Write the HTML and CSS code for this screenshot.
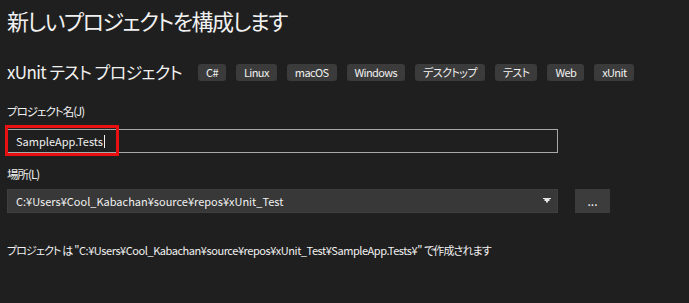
FILE: index.html
```html
<!DOCTYPE html>
<html lang="ja">
<head>
<meta charset="utf-8">
<link rel="stylesheet" href="styles.css">
</head>
<body>
<main class="page">
  <h1 class="title">新しいプロジェクトを構成します</h1>
  <div class="header-row">
    <h2 class="subtitle">xUnit テスト プロジェクト</h2>
    <ul class="tags">
      <li class="tag">C#</li>
      <li class="tag">Linux</li>
      <li class="tag">macOS</li>
      <li class="tag">Windows</li>
      <li class="tag">デスクトップ</li>
      <li class="tag">テスト</li>
      <li class="tag">Web</li>
      <li class="tag">xUnit</li>
    </ul>
  </div>

  <label class="label label-name">プロジェクト名(J)</label>
  <div class="field">
    <div class="textbox"><span class="value">SampleApp.Tests</span><span class="caret"></span></div>
    <span class="highlight"></span>
  </div>

  <label class="label label-loc">場所(L)</label>
  <div class="loc-row">
    <div class="combo">
      <span class="value">C:¥Users¥Cool_Kabachan¥source¥repos¥xUnit_Test</span>
      <svg class="arrow" width="8" height="5" viewBox="0 0 8 5"><path d="M0 0H8V1H6.5V3H5V4.5H3V3H1.5V1H0Z" fill="#e6e6e6"/></svg>
    </div>
    <button class="browse">...</button>
  </div>

  <p class="summary"><span class="jp">プロジェクト は</span> "C:¥Users¥Cool_Kabachan¥source¥repos¥xUnit_Test¥SampleApp.Tests¥" <span class="jp">で作成されます</span></p>
</main>
</body>
</html>
```
FILE: styles.css
```css
html, body {
  margin: 0;
  padding: 0;
  background: #1f1f1f;
}
body {
  width: 689px;
  height: 303px;
  overflow: hidden;
  color: #f1f1f1;
  font-family: "Noto Sans CJK JP", "Noto Sans", sans-serif;
  font-feature-settings: "palt";
}
.page {
  padding: 0 7px;
}
.title {
  margin: 0;
  font-size: 22px;
  font-weight: 400;
  letter-spacing: -1.5px;
  line-height: 40px;
  height: 40px;
}
.header-row {
  display: flex;
  align-items: center;
  margin-top: 20px;
  height: 24px;
}
.subtitle {
  margin: 0;
  flex: 0 0 191px;
  white-space: nowrap;
  font-size: 17px;
  font-weight: 400;
  letter-spacing: -0.6px;
  line-height: 24px;
}
.tags {
  display: flex;
  gap: 10px;
  list-style: none;
  margin: 0;
  padding: 0;
}
.tag {
  background: #3b3b3b;
  border-radius: 3px;
  height: 17px;
  line-height: 17px;
  padding: 0 8px;
  font-size: 11px;
  letter-spacing: -0.6px;
  color: #f1f1f1;
  white-space: nowrap;
}
.label {
  display: block;
  font-size: 11.5px;
  letter-spacing: -1px;
  line-height: 16px;
}
.label-name {
  margin-top: 19px;
}
.field {
  position: relative;
  margin-top: 10px;
  width: 551px;
}
.textbox {
  box-sizing: border-box;
  height: 24px;
  border: 1px solid #a8a8a8;
  padding-left: 8px;
  font-size: 11px;
  line-height: 22px;
  display: flex;
  align-items: center;
}
.caret {
  display: inline-block;
  width: 1px;
  height: 13px;
  background: #f1f1f1;
  margin-left: 1px;
}
.highlight {
  position: absolute;
  left: -2px;
  top: -4px;
  width: 114px;
  height: 31px;
  box-sizing: border-box;
  border: 3px solid #e81010;
}
.label-loc {
  margin-top: 13px;
}
.loc-row {
  display: flex;
  gap: 17px;
  margin-top: 7px;
}
.combo {
  box-sizing: border-box;
  width: 551px;
  height: 24px;
  background: #383838;
  border: 1px solid #3f3f3f;
  padding: 0 6px 0 8px;
  display: flex;
  align-items: center;
  justify-content: space-between;
  font-size: 11px;
}
.arrow {
  display: block;
  margin-top: -2px;
}
.browse {
  width: 35px;
  height: 24px;
  background: #3c3c3c;
  border: none;
  color: #f1f1f1;
  font-family: inherit;
  font-size: 12px;
  line-height: 24px;
  padding: 0;
}
.summary {
  margin: 29px 0 0;
  font-size: 11px;
  letter-spacing: -0.45px;
  line-height: 16px;
  white-space: nowrap;
}
.summary .jp {
  letter-spacing: -0.9px;
}
```
